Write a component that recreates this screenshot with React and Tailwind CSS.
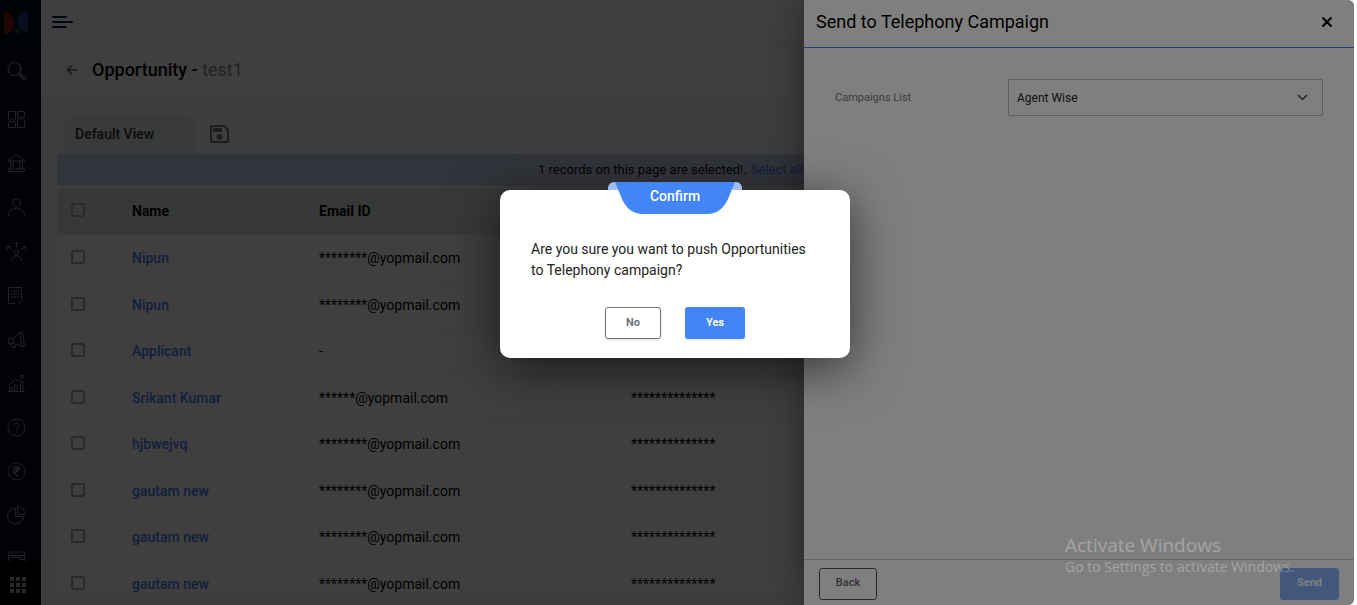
import React, { useState } from 'react';

const LEADS = [
  { name: 'Nipun', email: '********@yopmail.com', mobile: '' },
  { name: 'Nipun', email: '********@yopmail.com', mobile: '' },
  { name: 'Applicant', email: '-', mobile: '' },
  { name: 'Srikant Kumar', email: '******@yopmail.com', mobile: '**************' },
  { name: 'hjbwejvq', email: '********@yopmail.com', mobile: '**************' },
  { name: 'gautam new', email: '********@yopmail.com', mobile: '**************' },
  { name: 'gautam new', email: '********@yopmail.com', mobile: '**************' },
  { name: 'gautam new', email: '********@yopmail.com', mobile: '**************' },
];

const NAV_ICONS = {
  Dashboard: (
    <>
      <rect x="2.5" y="2.5" width="7" height="8.5" rx="0.5" />
      <rect x="11.5" y="2.5" width="7" height="5.5" rx="0.5" />
      <rect x="2.5" y="13" width="7" height="5.5" rx="0.5" />
      <rect x="11.5" y="10" width="7" height="8.5" rx="0.5" />
    </>
  ),
  Institutes: (
    <>
      <path d="M2.5 7 10.5 2l8 5v1h-16z" />
      <path d="M4.5 8v8M7 8v8M14 8v8M16.5 8v8" />
      <rect x="2.5" y="16" width="16" height="2.5" />
    </>
  ),
  Contacts: (
    <>
      <circle cx="10.5" cy="6" r="4" />
      <path d="M2.5 19c0-4.5 3.5-7.5 8-7.5s8 3 8 7.5" />
    </>
  ),
  Allocation: (
    <>
      <circle cx="10.5" cy="11.5" r="2.5" />
      <path d="M5.500 20c0-3 2-5 5-5s5 2 5 5" />
      <path d="M10.5 6.5V1M8.5 3l2-2 2 2M6 9 1.5 5.5M1.5 8.5v-3h3M15 9l4.5-3.5M19.5 8.5v-3h-3" />
    </>
  ),
  Applications: (
    <>
      <path d="M9 18.5H2.5v-16h13V14" />
      <path d="M5 6h8M5 9h8M5 12h8M11.5 16l2.5 2.5 5-5" />
    </>
  ),
  Marketing: (
    <>
      <path d="M2.5 9.5v5l4.5-.5 9 3.5 2.500-.5-2-14-2.500.5L7 9z" />
      <path d="m14 4 2 13.5M7 9v5M5 14.5l1.5 4h3l-1-4" />
    </>
  ),
  Reports: (
    <>
      <path d="M2 18.5h17M3.5 18v-3.500H6V18M8.500 18v-6H11v6M14.500 18V8.500H17V18" />
      <path d="m3 12 6.500-6 2.500 2 4.500-5M14 2.500h3v3" />
    </>
  ),
  Help: (
    <>
      <circle cx="10.5" cy="10.5" r="8.5" />
      <path d="M8 8.500a2.500 2.500 0 1 1 3.800 2c-1 .6-1.300 1.100-1.300 2.300M10.500 14.500v1.200" />
    </>
  ),
  Payments: (
    <>
      <circle cx="10.5" cy="10.5" r="8.5" />
      <path d="M7 6h7M7 8.500h7M7 6h2.500c3 0 3 5 0 5H7.500l4.500 4.500" strokeWidth="1.500" />
    </>
  ),
  Analytics: (
    <>
      <path d="M9.500 3a8 8 0 1 0 8 8.500h-8z" />
      <path d="M11.500 1.500V9.500h7.500a7.500 7.500 0 0 0-7.500-8z" />
    </>
  ),
  Wallet: (
    <>
      <path d="M2.500 18V4.500A1.500 1.500 0 0 1 4 3h13a1.500 1.500 0 0 1 1.500 1.500V18" />
      <path d="M2.500 6.500h16M6 8.500h7M14 6.500v4h4" />
    </>
  ),
};

function SideIcon({ children }) {
  return (
    <svg viewBox="0 0 21 21" className="w-[21px] h-[21px]" fill="none" stroke="currentColor" strokeWidth="1">
      {children}
    </svg>
  );
}

function Sidebar() {
  return (
    <aside className="w-[41px] flex-shrink-0 bg-[#030a1f] text-[#8c8c8c] flex flex-col">
      <a href="#home" aria-label="Home" className="h-[46px] flex-shrink-0 flex items-center pl-1 bg-[#06101c]">
        <svg viewBox="0 0 24 24" className="w-6 h-6">
          <path d="M0 1a10.5 11 0 0 1 0 22z" fill="#801c14" />
          <path d="M24 0a10.5 10.5 0 0 0 0 21z" fill="#1c3c80" />
          <circle cx="13" cy="20" r="2.5" fill="#0f5a2c" />
        </svg>
      </a>
      <button type="button" aria-label="Search" className="h-[51px] flex-shrink-0 pl-[6px] text-[#909090]">
        <SideIcon>
          <circle cx="8.5" cy="8" r="6.5" strokeWidth="1.2" />
          <path d="m13 13.500 1.200-1.200 5 4.700a1.200 1.200 0 0 1-1.700 1.700z" strokeWidth="1.200" />
        </SideIcon>
      </button>
      <nav className="flex-1 min-h-0 overflow-hidden">
        {Object.entries(NAV_ICONS).map(([label, icon]) => (
          <a key={label} href="#nav" aria-label={label} className="h-11 flex items-center pl-[6px]">
            <SideIcon>{icon}</SideIcon>
          </a>
        ))}
      </nav>
      <button type="button" aria-label="Apps" className="h-11 flex-shrink-0 pl-[10px] bg-black text-[#a0a0a0]">
        <svg viewBox="0 0 16 16" className="w-4 h-4 mt-1" fill="currentColor">
          {[0, 6, 12].map((y) => [0, 6, 12].map((x) => <rect key={`${x}-${y}`} x={x} y={y} width="4" height="4" />))}
        </svg>
      </button>
    </aside>
  );
}

function Checkbox({ label }) {
  return (
    <input
      type="checkbox"
      aria-label={label}
      className="block appearance-none w-[14px] h-[14px] border-2 border-[#a8a8a8] rounded-[2px] checked:bg-[#4285f4]"
    />
  );
}

function LeadTable() {
  return (
    <table className="w-full table-fixed bg-white text-sm text-left text-black">
      <thead>
        <tr className="h-[46px] bg-[#dfe6e2]">
          <th className="w-[59px] pl-[14px] pb-1"><Checkbox label="Select all rows" /></th>
          <th className="w-[187px] px-4 pb-[2px] font-bold">Name</th>
          <th className="w-[312px] px-4 pb-[2px] font-bold">Email ID</th>
          <th className="px-4" />
        </tr>
      </thead>
      <tbody>
        {LEADS.map((lead, i) => (
          <tr key={i} className="odd:h-[46px] even:h-[47px] border-b border-[#f0f0f0]">
            <td className="pl-[14px] pb-[2px]"><Checkbox label={lead.name} /></td>
            <td className="px-4"><a href="#lead" className="font-medium text-[#4a7df8]">{lead.name}</a></td>
            <td className="px-4">{lead.email}</td>
            <td className="px-4">{lead.mobile}</td>
          </tr>
        ))}
      </tbody>
    </table>
  );
}

function OpportunityPage() {
  return (
    <div className="flex h-full">
      <Sidebar />
      <div className="flex-1 min-w-0 flex flex-col bg-[#f6f6f6]">
        {/* Top bar */}
        <header className="h-[47px] flex-shrink-0 flex items-center pl-[11px] pb-[2px] bg-white border-b border-[#e6e6e6]">
          <button type="button" aria-label="Toggle menu">
            <svg viewBox="0 0 21 12" className="w-[21px] h-3" fill="#13234d">
              <rect width="15" height="2" rx="1" />
              <rect y="5" width="21" height="2" rx="1" />
              <rect y="10" width="15" height="2" rx="1" />
            </svg>
          </button>
        </header>

        {/* Page title */}
        <div className="h-[52px] flex-shrink-0 flex items-center gap-[5px] pl-4 pb-[6px] bg-white border-b border-[#e8ecec]">
          <button type="button" aria-label="Go back" className="w-[30px] h-[30px] rounded-full bg-[#fafafa] flex items-center justify-center">
            <svg viewBox="0 0 12 12" className="w-3 h-3" fill="none" stroke="#5b6a76" strokeWidth="1.5">
              <path d="M11 6H1.500M6 1.500 1.500 6 6 10.500" />
            </svg>
          </button>
          <h1 className="text-lg font-medium text-black">
            Opportunity - <span className="font-normal text-[#8a8a8a]">test1</span>
          </h1>
        </div>

        <div className="flex-1 min-h-0 flex flex-col px-4 pt-[15px] pb-[13px]">
          <div className="flex items-center pl-2">
            <button type="button" className="w-[130px] h-10 pl-[10px] text-left text-sm text-[#333] font-medium bg-[#e6ece8] rounded-t-xl">
              Default View
            </button>
            <button type="button" aria-label="Save view" className="ml-[15px]">
              <svg viewBox="0 0 19 18" className="w-[19px] h-[18px]" fill="none" stroke="#70767d" strokeWidth="2">
                <path d="M2 1h12l4 4v11a1 1 0 0 1-1 1H2a1 1 0 0 1-1-1V2a1 1 0 0 1 1-1z" />
                <path d="M3 5h9" strokeWidth="4" />
                <circle cx="9.5" cy="12" r="3" fill="#70767d" stroke="none" />
              </svg>
            </button>
          </div>
          <div className="h-8 flex-shrink-0 mb-[3px] flex items-center gap-1 pl-[481px] bg-[#c8d2ee] rounded-[4px] text-[13px] text-[#111] whitespace-nowrap">
            1 records on this page are selected!.
            <a href="#all" className="text-[#4a7df8]">Select all</a>
          </div>
          <div className="min-h-0 overflow-hidden">
            <LeadTable />
          </div>
        </div>
      </div>
    </div>
  );
}

function CampaignDrawer() {
  const [campaign, setCampaign] = useState('Agent Wise');

  return (
    <section className="absolute inset-y-0 right-0 w-[550px] bg-white flex flex-col shadow-[0_0_40px_rgba(0,0,0,0.4)]">
      <div className="h-12 flex-shrink-0 flex items-center justify-between pl-3 pr-[21px] pb-1 border-b border-[#4a7df8]">
        <h2 className="text-lg text-black font-normal">Send to Telephony Campaign</h2>
        <button type="button" aria-label="Close">
          <svg viewBox="0 0 12 12" className="w-3 h-3" fill="none" stroke="#000" strokeWidth="2.2">
            <path d="m1.500 1.500 9 9M10.500 1.500l-9 9" />
          </svg>
        </button>
      </div>

      <div className="flex-1 flex items-start px-[31px] pt-[31px]">
        <label htmlFor="campaign" className="w-[173px] text-[11px] leading-[37px] text-[#777]">Campaigns List</label>
        <div className="relative flex-1">
          <select
            id="campaign"
            value={campaign}
            onChange={(e) => setCampaign(e.target.value)}
            className="block appearance-none w-full h-[37px] pl-2 pr-8 border border-[#bcbcbc] rounded-[1px] text-xs text-[#222] bg-transparent"
          >
            <option>Agent Wise</option>
          </select>
          <svg viewBox="0 0 11 7" className="absolute right-[15px] top-[15px] w-[11px] h-[7px] pointer-events-none" fill="none" stroke="#444" strokeWidth="1.5">
            <path d="m1 1 4.500 4.500L10 1" />
          </svg>
        </div>
      </div>

      <div className="h-[46px] flex-shrink-0 flex items-center justify-between px-[15px] pt-[2px] border-t border-[#ccc] text-[11px]">
        <button type="button" className="w-[58px] h-8 border border-[#555] rounded-[3px] font-medium text-[#666]">Back</button>
        <button type="button" disabled className="w-[59px] h-8 rounded-[3px] font-bold text-white bg-[#4285f4] opacity-65">Send</button>
      </div>
    </section>
  );
}

function ConfirmDialog() {
  return (
    <div className="absolute inset-0 flex items-start justify-center pt-[190px] pr-1 bg-black/50">
      <div role="dialog" aria-labelledby="confirm-title" className="relative w-[350px] bg-white rounded-[10px] px-[31px] pt-[49px] pb-[19px] shadow-[0_10px_50px_rgba(0,0,0,0.6)]">
        {/* Title tab hanging over the top edge */}
        <div className="absolute -top-2 inset-x-0 flex justify-center">
          <div className="relative w-[134px] h-8">
            <svg viewBox="0 0 134 32" className="absolute inset-0 w-full h-full">
              <path d="M0 8V6a6 6 0 0 1 6-6h122a6 6 0 0 1 6 6v2z" fill="#a3bdf2" />
              <path d="M7 0h120l-7 17c-4 9-11 15-21 15H35C25 32 18 26 14 17z" fill="#4285f4" />
            </svg>
            <h3 id="confirm-title" className="relative text-center text-sm leading-7 font-medium text-white">Confirm</h3>
          </div>
        </div>

        <p className="text-sm leading-[21px] text-[#222]">
          Are you sure you want to push Opportunities to Telephony campaign?
        </p>
        <div className="flex justify-center gap-6 mt-[26px] text-[11px] font-bold">
          <button type="button" className="w-14 h-8 border border-[#6c757d] rounded-[3px] text-[#6c757d] bg-white shadow-sm">No</button>
          <button type="button" className="w-[60px] h-8 rounded-[3px] text-white bg-[#4285f4] shadow-sm">Yes</button>
        </div>
      </div>
    </div>
  );
}

export default function App() {
  return (
    <div className="h-screen bg-white pr-[3px] font-['Roboto',sans-serif]">
      <div className="relative h-full overflow-hidden rounded-r-md">
        <OpportunityPage />
        <div className="absolute inset-0 bg-black/50" />
        <CampaignDrawer />
        <ConfirmDialog />
        <div className="absolute right-[53px] bottom-7 w-[236px] text-white/30 font-['Open_Sans',sans-serif] pointer-events-none whitespace-nowrap">
          <p className="text-[19px] leading-6">Activate Windows</p>
          <p className="text-sm leading-5">Go to Settings to activate Windows.</p>
        </div>
      </div>
    </div>
  );
}
